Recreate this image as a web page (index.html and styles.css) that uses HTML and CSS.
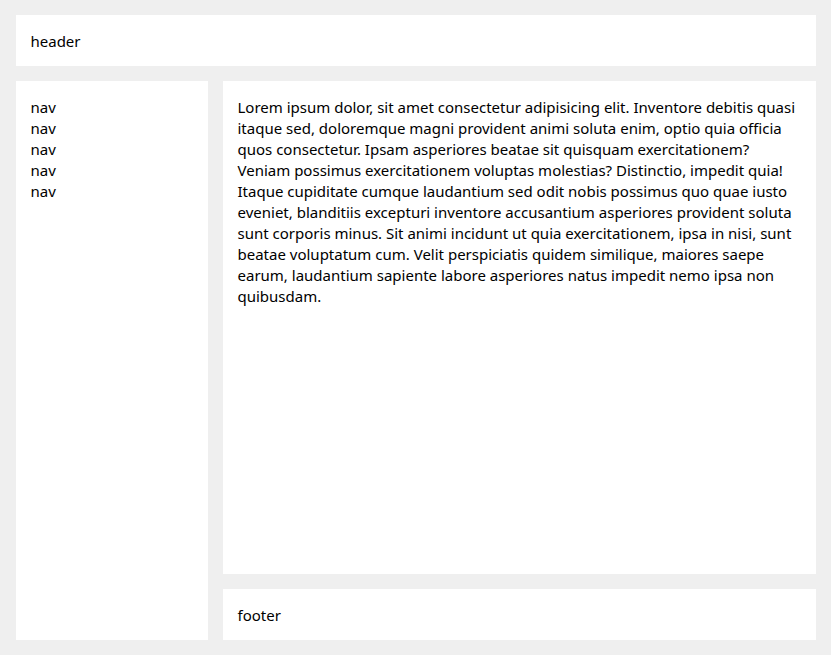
FILE: index.html
```html
<!DOCTYPE html>
<html lang="en">
<head>
<meta charset="utf-8">
<title>Layout</title>
<link rel="stylesheet" href="styles.css">
</head>
<body>
<div class="page">
  <header class="box header">header</header>
  <nav class="box nav">
    <div>nav</div>
    <div>nav</div>
    <div>nav</div>
    <div>nav</div>
    <div>nav</div>
  </nav>
  <main class="box main">Lorem ipsum dolor, sit amet consectetur adipisicing elit. Inventore debitis quasi itaque sed, doloremque magni provident animi soluta enim, optio quia officia quos consectetur. Ipsam asperiores beatae sit quisquam exercitationem? Veniam possimus exercitationem voluptas molestias? Distinctio, impedit quia! Itaque cupiditate cumque laudantium sed odit nobis possimus quo quae iusto eveniet, blanditiis excepturi inventore accusantium asperiores provident soluta sunt corporis minus. Sit animi incidunt ut quia exercitationem, ipsa in nisi, sunt beatae voluptatum cum. Velit perspiciatis quidem similique, maiores saepe earum, laudantium sapiente labore asperiores natus impedit nemo ipsa non quibusdam.</main>
  <footer class="box footer">footer</footer>
</div>
</body>
</html>
```
FILE: styles.css
```css
html, body {
  margin: 0;
  height: 100%;
}
body {
  background: #efefef;
  font-family: "Noto Sans", "Open Sans", sans-serif;
  font-size: 15px;
  line-height: 21px;
  color: #000;
  box-sizing: border-box;
  padding: 15px 0;
}
.page {
  max-width: 800px;
  height: 100%;
  margin: 0 auto;
  display: grid;
  grid-template-columns: 192px 1fr;
  grid-template-rows: 51px 1fr 51px;
  gap: 15px;
  grid-template-areas:
    "header header"
    "nav main"
    "nav footer";
}
.box {
  background: #fff;
  padding: 16px 15px 14px;
  box-sizing: border-box;
}
.header { grid-area: header; }
.nav { grid-area: nav; }
.main { grid-area: main; }
.footer { grid-area: footer; }
```
